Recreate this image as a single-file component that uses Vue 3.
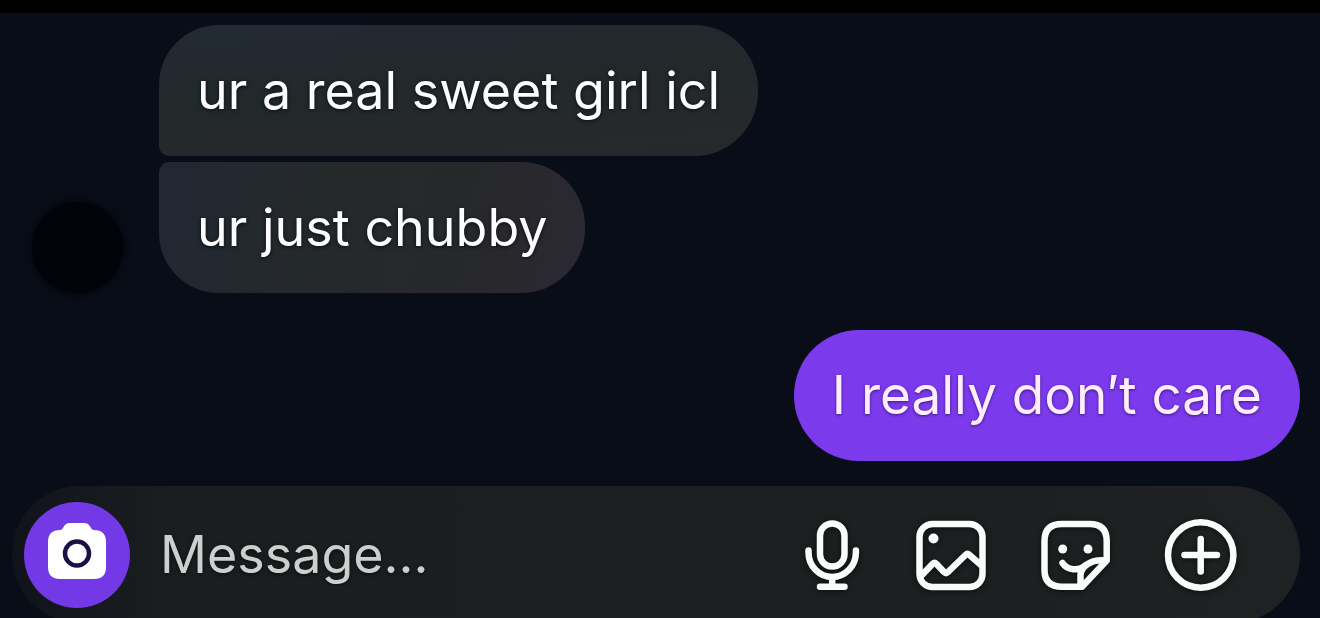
<script setup>
import { ref } from 'vue'

const draft = ref('')
const received = [
  { id: 1, text: 'ur a real sweet girl icl', place: 'first' },
  { id: 2, text: 'ur just chubby', place: 'last' },
]
const sent = 'I really don′t care'
</script>

<template>
  <div class="chat">
    <main class="thread">
      <section class="incoming">
        <div class="avatar"></div>
        <div class="stack">
          <p v-for="m in received" :key="m.id" class="bubble" :class="m.place">{{ m.text }}</p>
        </div>
      </section>
      <section class="outgoing">
        <p class="bubble mine">{{ sent }}</p>
      </section>
    </main>

    <form class="composer" @submit.prevent>
      <button type="button" class="camera" aria-label="Camera">
        <svg viewBox="0 0 106 106">
          <path fill="#fff" d="M36 28 C40 28 39 21 46 21 H60 C67 21 66 28 70 28 C78 28 82 32 82 40 V65 C82 73 78 77 70 77 H36 C28 77 24 73 24 65 V40 C24 32 28 28 36 28Z" />
          <circle cx="53" cy="51.500" r="12" fill="none" stroke="#1c1044" stroke-width="4.500" />
        </svg>
      </button>
      <input v-model="draft" type="text" placeholder="Message..." aria-label="Message" />
      <div class="tools">
        <button type="button" class="mic" aria-label="Voice message">
          <svg viewBox="0 0 60 72">
            <rect x="18" y="4.500" width="24.500" height="43" rx="12.200" />
            <path d="M6.500 31.500V33.500a23.700 24.500 0 0 0 47.400 0V31.500M30.200 58v8M18 67.700h24.500" />
          </svg>
        </button>
        <button type="button" aria-label="Photo">
          <svg viewBox="0 0 72 72">
            <rect x="4.500" y="5" width="63" height="63" rx="13" />
            <path d="M7 56 L17.500 45 Q19.500 43 21.500 45 L29 53 Q31 55 33 53 L50.500 36 Q52.500 34 54.500 36 L66 46" />
            <circle class="dot" cx="18.500" cy="19.500" r="5" />
          </svg>
        </button>
        <button type="button" aria-label="Stickers">
          <svg viewBox="0 0 72 72">
            <path d="M42 67.700H22Q4.500 67.700 4.500 51V22Q4.500 5 22 5H49.500Q66.700 5 66.700 22V41.500L42 67.700Z" />
            <path d="M66 41.500C50 40 41 48 40.500 56V67M22.500 44C27 51 38 53 46 46" />
            <circle class="dot" cx="22.700" cy="30" r="4.500" />
            <circle class="dot" cx="48" cy="30" r="4.500" />
          </svg>
        </button>
        <button type="button" aria-label="More">
          <svg viewBox="0 0 72 72">
            <circle cx="35.700" cy="36" r="32.700" />
            <path d="M19.500 36h32.500M35.700 20v32.500" />
          </svg>
        </button>
      </div>
    </form>
  </div>
</template>

<style>
body {
  margin: 0;
  background: #090d17;
}
</style>

<style scoped>
.chat {
  box-sizing: border-box;
  height: 100vh;
  overflow: hidden;
  border-top: 13px solid #000;
  background: #090d17;
  font-family: Inter, "Liberation Sans", sans-serif;
  font-size: 52px;
  line-height: 65px;
}

.thread {
  display: flex;
  flex-direction: column;
  gap: 37px;
  padding: 12px 20px 25px 32px;
}

.incoming {
  display: flex;
  align-items: flex-end;
  gap: 36px;
}

.avatar {
  width: 91px;
  height: 91px;
  border-radius: 50%;
  background: #020309;
  box-shadow: 0 0 8px #020309;
}

.stack {
  display: flex;
  flex-direction: column;
  align-items: flex-start;
  gap: 6px;
}

.bubble {
  margin: 0;
  padding: 33px 38px;
  color: #fafcff;
  text-shadow: 0 1px 4px rgba(0, 0, 0, 0.7);
  white-space: nowrap;
}

.first {
  border-radius: 60px 64px 64px 10px;
  background: linear-gradient(175deg, #222a34, #22292b 45%, #28282b);
}

.last {
  border-radius: 10px 64px 64px 60px;
  background: linear-gradient(100deg, #212833, #25292a 40%, #272829 65%, #2a2933);
}

.outgoing {
  display: flex;
  justify-content: flex-end;
}

.mine {
  border-radius: 65px;
  background: #7b3aec;
  color: #feedff;
  font-size: 53px;
  text-shadow: 0 1px 3px rgba(40, 10, 80, 0.7);
}

.composer {
  display: flex;
  align-items: center;
  box-sizing: border-box;
  height: 137px;
  margin: 0 20px 0 12px;
  padding: 0 63px 0 12px;
  border-radius: 68px;
  background: linear-gradient(90deg, #10131a, #1b1e20 12%, #1d2021 80%, #202122);
}

button {
  flex: none;
  padding: 0;
  border: 0;
  background: none;
}

.camera {
  width: 106px;
  height: 106px;
  border-radius: 50%;
  background: #7439e6;
}

svg {
  display: block;
  width: 100%;
  height: 100%;
}

input {
  flex: 1;
  min-width: 0;
  margin: 0 30px;
  padding: 0;
  border: 0;
  outline: 0;
  background: none;
  color: #fafcff;
  font: inherit;
  text-shadow: 0 1px 4px rgba(0, 0, 0, 0.7);
}

input::placeholder {
  color: #cdcfcf;
  opacity: 1;
}

.tools {
  display: flex;
  gap: 53px;
}

.tools button {
  width: 72px;
  height: 72px;
}

.tools .mic {
  width: 60px;
}

.tools svg {
  overflow: visible;
  fill: none;
  stroke: #fafcfc;
  stroke-width: 6.5px;
  stroke-linecap: round;
  stroke-linejoin: round;
  filter: drop-shadow(0 1px 3px rgba(0, 0, 0, 0.6));
}

.tools .dot {
  fill: #fafcfc;
  stroke: none;
}
</style>
